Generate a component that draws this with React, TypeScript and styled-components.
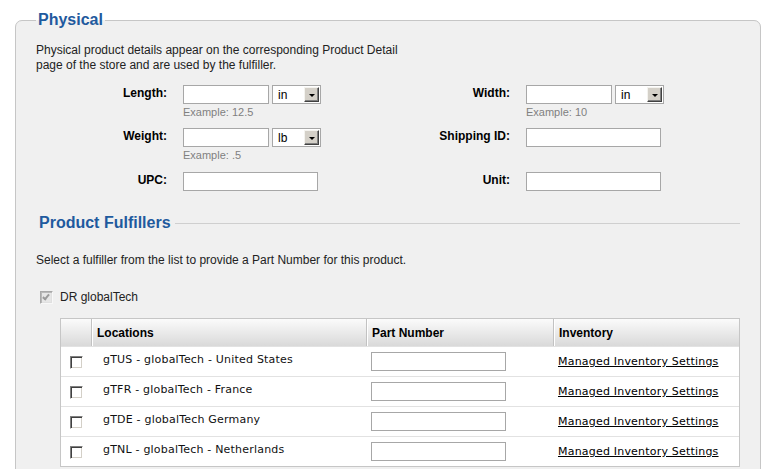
import React from 'react';
import styled, { createGlobalStyle } from 'styled-components';

const Global = createGlobalStyle`
  *, *::before, *::after { box-sizing: border-box; }
  html, body { margin: 0; padding: 0; background: #fff; }
  body {
    font-family: "Liberation Sans", Arial, sans-serif;
    font-size: 12px;
    color: #222;
  }
`;

const Page = styled.div`
  padding: 10px 14px 0 15px;
`;

const Panel = styled.fieldset`
  margin: 0;
  padding: 13px 20px 24px 20px;
  border: 1px solid #c6c6c6;
  border-radius: 7px;
  background: #f0f0f0;
  min-width: 0;
`;

const Legend = styled.legend`
  padding: 0 2px;
  font-size: 16px;
  font-weight: bold;
  line-height: 20px;
  color: #1f5a9e;
`;

const Description = styled.p`
  margin: 0;
  max-width: 385px;
  line-height: 15px;
  color: #222;
`;

const FieldGrid = styled.div`
  display: grid;
  grid-template-columns: 131px 201px 110px 1fr;
  grid-template-rows: 43px 44px auto;
  column-gap: 16px;
  margin-top: 12px;
`;

const Label = styled.label`
  justify-self: end;
  font-weight: bold;
  color: #000;
  line-height: 16px;
  white-space: nowrap;
`;

const Field = styled.div`
  display: flex;
  flex-direction: column;
  align-items: flex-start;
`;

const FieldLine = styled.div`
  display: flex;
  gap: 3px;
`;

const TextInput = styled.input.attrs({ type: 'text' })<{ $w: number }>`
  width: ${p => p.$w}px;
  height: 19px;
  margin: 0;
  padding: 1px 3px;
  border: 1px solid #a7a7a7;
  background: #fff;
  font: 12px "Liberation Sans", Arial, sans-serif;
  outline: none;
`;

const Hint = styled.div`
  margin-top: 2px;
  font-size: 11px;
  line-height: 13px;
  color: #808080;
`;

const SelectBox = styled.div`
  display: flex;
  align-items: center;
  width: 49px;
  height: 19px;
  padding: 1px;
  border: 1px solid #a7a7a7;
  background: #fff;
`;

const NativeSelect = styled.select`
  flex: 1;
  min-width: 0;
  height: 100%;
  margin: 0;
  padding: 0 0 0 4px;
  border: none;
  background: transparent;
  appearance: none;
  font: 12px "Liberation Sans", Arial, sans-serif;
  color: #000;
  outline: none;
`;

const ArrowButton = styled.span`
  display: flex;
  align-items: center;
  justify-content: center;
  width: 15px;
  height: 15px;
  background: #d4d0c8;
  border: 1px solid;
  border-color: #f4f3ef #404040 #404040 #f4f3ef;
  box-shadow: inset -1px -1px #808080;
  &::after {
    content: '';
    width: 0;
    height: 0;
    margin-top: 1px;
    border-left: 3px solid transparent;
    border-right: 3px solid transparent;
    border-top: 3px solid #000;
  }
`;

const SectionHeading = styled.div`
  display: flex;
  align-items: center;
  gap: 4px;
  margin: 22px 0 0 3px;
  font-size: 16px;
  font-weight: bold;
  line-height: 20px;
  color: #1f5a9e;
  &::after {
    content: '';
    flex: 1;
    border-top: 1px solid #cfcfcf;
  }
`;

const Intro = styled.p`
  margin: 20px 0 0 0;
  line-height: 15px;
  color: #222;
`;

const FulfillerRow = styled.label`
  display: flex;
  align-items: center;
  gap: 7px;
  margin: 22px 0 0 4px;
  line-height: 15px;
  color: #222;
`;

const Check = styled.input.attrs({ type: 'checkbox' })`
  appearance: none;
  position: relative;
  flex: none;
  margin: 0;
  width: 13px;
  height: 13px;
  background: #fff;
  border: 1px solid;
  border-color: #808080 #ffffff #ffffff #808080;
  box-shadow: inset 1px 1px #404040, inset -1px -1px #d4d0c8;
  &:disabled {
    background: #e6e6e6;
    border-color: #a8a8a8 #f8f8f8 #f8f8f8 #a8a8a8;
    box-shadow: inset 1px 1px #b8b8b8, inset -1px -1px #e0e0e0;
  }
  &:checked::after {
    content: '';
    position: absolute;
    left: 3px;
    top: 1px;
    width: 4px;
    height: 7px;
    border: solid #000;
    border-width: 0 2px 2px 0;
    transform: rotate(40deg);
  }
  &:disabled:checked::after {
    border-color: #9a9a9a;
  }
`;

const Table = styled.table`
  margin: 13px 0 0 24px;
  width: 680px;
  border: 1px solid #c6c6c6;
  border-spacing: 0;
  border-collapse: separate;
  table-layout: fixed;
  background: #fff;
`;

const Col = styled.col<{ $w: number }>`
  width: ${p => p.$w}px;
`;

const HeadCell = styled.th<{ $first?: boolean }>`
  height: 27px;
  padding: 0 0 0 5px;
  text-align: left;
  vertical-align: middle;
  font-size: 12px;
  font-weight: bold;
  color: #000;
  background: linear-gradient(#fbfbfb, #d9d9d9);
  border-left: ${p => (p.$first ? 'none' : '1px solid #c2c2c2')};
  box-shadow: ${p => (p.$first ? 'none' : 'inset 1px 0 #ffffff')};
`;

const Cell = styled.td<{ $pad?: number; $top?: boolean; $center?: boolean }>`
  height: 30px;
  padding: ${p => (p.$top ? '6px' : '0')} 0 0 ${p => p.$pad ?? 5}px;
  border-top: 1px solid #e2e2e2;
  vertical-align: ${p => (p.$top ? 'top' : 'middle')};
  text-align: ${p => (p.$center ? 'center' : 'left')};
  font-family: "DejaVu Sans", Verdana, sans-serif;
  font-size: 11px;
  letter-spacing: 0.2px;
  line-height: 13px;
  color: #111;
  white-space: nowrap;
`;

const CheckCenter = styled.div`
  display: flex;
  justify-content: center;
  padding-top: 2px;
`;

const InvLink = styled.a`
  color: #000;
  text-decoration: underline;
  cursor: pointer;
`;

const locations = [
  'gTUS - globalTech - United States',
  'gTFR - globalTech - France',
  'gTDE - globalTech Germany',
  'gTNL - globalTech - Netherlands',
];

function UnitSelect({ options }: { options: string[] }) {
  return (
    <SelectBox>
      <NativeSelect defaultValue={options[0]}>
        {options.map(o => (
          <option key={o}>{o}</option>
        ))}
      </NativeSelect>
      <ArrowButton />
    </SelectBox>
  );
}

export default function App() {
  return (
    <>
      <Global />
      <Page>
        <Panel>
          <Legend>Physical</Legend>
          <Description>
            Physical product details appear on the corresponding Product Detail page of the store and are used by the
            fulfiller.
          </Description>

          <FieldGrid>
            <Label>Length:</Label>
            <Field>
              <FieldLine>
                <TextInput $w={86} />
                <UnitSelect options={['in', 'cm']} />
              </FieldLine>
              <Hint>Example: 12.5</Hint>
            </Field>
            <Label>Width:</Label>
            <Field>
              <FieldLine>
                <TextInput $w={86} />
                <UnitSelect options={['in', 'cm']} />
              </FieldLine>
              <Hint>Example: 10</Hint>
            </Field>

            <Label>Weight:</Label>
            <Field>
              <FieldLine>
                <TextInput $w={86} />
                <UnitSelect options={['lb', 'kg']} />
              </FieldLine>
              <Hint>Example: .5</Hint>
            </Field>
            <Label>Shipping ID:</Label>
            <Field>
              <TextInput $w={135} />
            </Field>

            <Label>UPC:</Label>
            <Field>
              <TextInput $w={135} />
            </Field>
            <Label>Unit:</Label>
            <Field>
              <TextInput $w={135} />
            </Field>
          </FieldGrid>

          <SectionHeading>Product Fulfillers</SectionHeading>
          <Intro>Select a fulfiller from the list to provide a Part Number for this product.</Intro>

          <FulfillerRow>
            <Check defaultChecked disabled />
            DR globalTech
          </FulfillerRow>

          <Table>
            <colgroup>
              <Col $w={30} />
              <Col $w={275} />
              <Col $w={187} />
              <Col $w={186} />
            </colgroup>
            <thead>
              <tr>
                <HeadCell $first />
                <HeadCell>Locations</HeadCell>
                <HeadCell>Part Number</HeadCell>
                <HeadCell>Inventory</HeadCell>
              </tr>
            </thead>
            <tbody>
              {locations.map(loc => (
                <tr key={loc}>
                  <Cell $pad={0} $center>
                    <CheckCenter>
                      <Check />
                    </CheckCenter>
                  </Cell>
                  <Cell $pad={12} $top>
                    {loc}
                  </Cell>
                  <Cell $pad={5}>
                    <TextInput $w={135} />
                  </Cell>
                  <Cell $pad={5}>
                    <InvLink>Managed Inventory Settings</InvLink>
                  </Cell>
                </tr>
              ))}
            </tbody>
          </Table>
        </Panel>
      </Page>
    </>
  );
}
